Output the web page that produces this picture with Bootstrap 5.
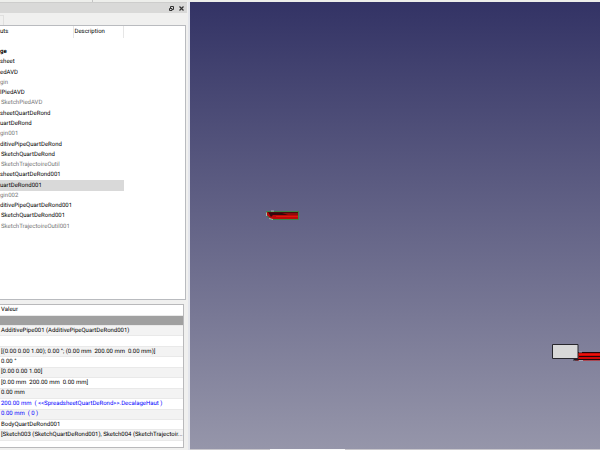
<!DOCTYPE html>
<html lang="fr">
<head>
<meta charset="utf-8">
<meta name="viewport" content="width=device-width, initial-scale=1">
<title>FreeCAD</title>
<link rel="stylesheet" href="https://cdn.jsdelivr.net/npm/bootstrap@5.3.0/dist/css/bootstrap.min.css">
<style>
body{font-family:Roboto,"Open Sans",sans-serif;font-size:6px;line-height:8px;color:#000;background:#f0f0ef;text-rendering:geometricPrecision}
.topstrip{height:2px;background:#edeeeb}
.topstrip i{width:1px;height:2px;margin-left:92px;background:#c4c4c4}
.dock{width:190px;border-right:2px solid #e4e6ec}
.titlebar{height:11px;margin-right:1px;padding-right:2px;gap:3px;background:#d9d9d8;border-top:1px solid #cdcdcc}
.titlebar button{width:7px;height:8px;line-height:0}
.tabline{height:12px}
.tabline span{width:4px;height:10px;border:1px solid #e0e0df;border-left:0;border-bottom:0}
.tree{height:275px;margin-right:2px;border:1px solid #b9bbbf;border-left:0;background:#fff}
.tree table{width:124px;height:206px}
.prop{height:144px;margin:4px 4px 0 0;border:1px solid #b9b9bb;border-left:0;background:#fff}
.prop table{height:136px}
table{table-layout:fixed;border-collapse:collapse;color:#000}
th,td{padding:0;font-weight:400;white-space:nowrap;overflow:hidden}
.tree th{height:12px;border-right:1px solid #e6e6e6}
.tree .c1{width:73px}
.tree th+th{padding-left:1px}
.tree .gap td{height:9px}
.tree .off{color:#777}
.in{padding-left:1px}
.sel{background:#d9d9d9}
.prop th,.prop td{height:10px;padding-left:1px;border-bottom:1px solid #e9e9e9}
.prop .group td{background:#a0a0a0}
.alt td{background:#f3f3f3}
.prop .expr{color:#00f}
.view3d{min-width:0;background:linear-gradient(#333365,#9696aa)}
.view3d svg{position:absolute}
.pieceA{left:74px;top:205px}
.pieceB{right:0;top:338px}
.bottomline{height:1px;background:#c9c7cc}
.bottomline i{width:75px;height:1px;margin-left:80px;background:#fafafa}
</style>
<script src="https://cdn.jsdelivr.net/npm/bootstrap@5.3.0/dist/js/bootstrap.bundle.min.js"></script>
</head>
<body class="vh-100 d-flex flex-column overflow-hidden">
<div class="topstrip d-flex"><i></i></div>
<div class="d-flex flex-fill">
<aside class="dock flex-shrink-0">
  <div class="titlebar d-flex justify-content-end align-items-center">
    <button type="button" class="btn p-0 border-0" aria-label="Détacher"><svg width="7" height="7" viewBox="0 0 7 7" fill="none" stroke="#333"><path d="M2.500 3V1.500H5.500V4.500H4"/><path d="M1.500 3.500H4V5.500H1.500Z" fill="#ddd"/></svg></button>
    <button type="button" class="btn p-0 border-0" aria-label="Fermer"><svg width="7" height="7" viewBox="0 0 7 7" stroke="#333" stroke-width="1.200"><path d="M1.500 1.500 5.500 5.500M5.500 1.500 1.500 5.500"/></svg></button>
  </div>
  <div class="tabline d-flex align-items-end"><span></span></div>
  <section class="tree">
    <table>
      <colgroup><col class="c1"><col></colgroup>
      <thead><tr><th>uts</th><th>Description</th></tr></thead>
      <tbody>
      <tr class="gap"><td colspan="2"></td></tr>
      <tr><td colspan="2" class="fw-bold">ge</td></tr>
      <tr><td colspan="2">sheet</td></tr>
      <tr><td colspan="2">edAVD</td></tr>
      <tr><td colspan="2" class="off">gin</td></tr>
      <tr><td colspan="2">lPiedAVD</td></tr>
      <tr><td colspan="2" class="off in">SketchPiedAVD</td></tr>
      <tr><td colspan="2">sheetQuartDeRond</td></tr>
      <tr><td colspan="2">uartDeRond</td></tr>
      <tr><td colspan="2" class="off">gin001</td></tr>
      <tr><td colspan="2">ditivePipeQuartDeRond</td></tr>
      <tr><td colspan="2" class="in">SketchQuartDeRond</td></tr>
      <tr><td colspan="2" class="off in">SketchTrajectoireOutil</td></tr>
      <tr><td colspan="2">sheetQuartDeRond001</td></tr>
      <tr><td colspan="2" class="sel">uartDeRond001</td></tr>
      <tr><td colspan="2" class="off">gin002</td></tr>
      <tr><td colspan="2">ditivePipeQuartDeRond001</td></tr>
      <tr><td colspan="2" class="in">SketchQuartDeRond001</td></tr>
      <tr><td colspan="2" class="off in">SketchTrajectoireOutil001</td></tr>
      </tbody>
    </table>
  </section>
  <section class="prop">
    <table class="w-100">
      <thead><tr><th>Valeur</th></tr></thead>
      <tbody>
      <tr class="group"><td></td></tr>
      <tr class="alt"><td>AdditivePipe001 (AdditivePipeQuartDeRond001)</td></tr>
      <tr><td></td></tr>
      <tr class="alt"><td>[(0.00 0.00 1.00); 0.00 °; (0.00 mm&nbsp; 200.00 mm&nbsp; 0.00 mm)]</td></tr>
      <tr><td>0.00 °</td></tr>
      <tr class="alt"><td>[0.00 0.00 1.00]</td></tr>
      <tr><td>[0.00 mm&nbsp; 200.00 mm&nbsp; 0.00 mm]</td></tr>
      <tr class="alt"><td>0.00 mm</td></tr>
      <tr><td class="expr">200.00 mm&nbsp; ( &lt;&lt;SpreadsheetQuartDeRond&gt;&gt;.DecalageHaut )</td></tr>
      <tr class="alt"><td class="expr">0.00 mm&nbsp; ( 0 )</td></tr>
      <tr><td>BodyQuartDeRond001</td></tr>
      <tr class="alt"><td>[Sketch003 (SketchQuartDeRond001), Sketch004 (SketchTrajectoir...</td></tr>
      </tbody>
    </table>
  </section>
</aside>
<main class="view3d flex-fill position-relative d-flex flex-column justify-content-end">
  <svg class="pieceA" width="38" height="14" viewBox="0 0 38 14"><path d="M3 4.500H35V12H7L3 8Z" fill="#b90a08"/><path d="M4 5H18L34 8H9L7 10Z" fill="#35080c"/><path d="M5 5H34V6H5Z" fill="#4a0a0c"/><path d="M18 6H34V8H24Z" fill="#8c0d0c"/><path d="M12 9H34V10H12Z" fill="#e11408"/><path d="M2.500 4.500H34.500V12.500H7L2.500 9Z" fill="none" stroke="#3d8545"/><path d="M2.500 5.500V9M5 11.500 9 12.500M7 4H10" stroke="#a5b3ab"/></svg>
  <svg class="pieceB" width="50" height="24" viewBox="0 0 50 24"><path d="M25 12.500H50V20.500H25Z" fill="#cf0807"/><path d="M27 12.500H50M24 19.500H50M29 16.500H50" stroke="#240608"/><path d="M28 14.500H50" stroke="#ee1208"/><path d="M2.500 4.500H28V18.500H2.500Z" fill="#d8d8d8" stroke="#27262d"/><path d="M23 20H28" stroke="#27262d"/><path d="M29 12H32M29 20.500H33" stroke="#aaa4b2"/></svg>
  <div class="bottomline"><i class="d-block"></i></div>
</main>
</div>
</body>
</html>
